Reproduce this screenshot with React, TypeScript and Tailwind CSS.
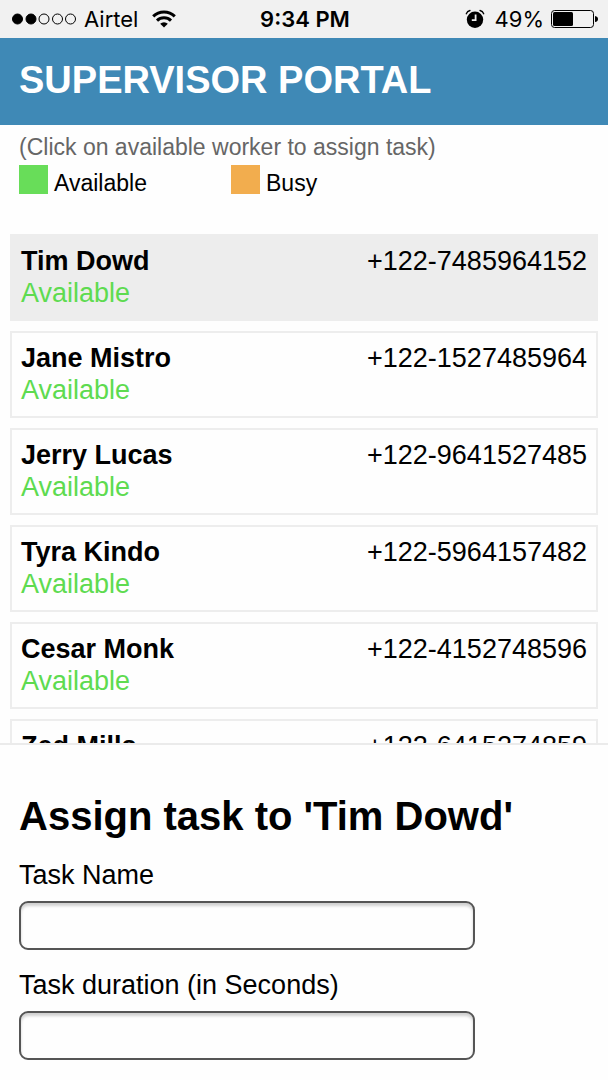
import { useState } from "react";

const workers = [
  { name: "Tim Dowd", phone: "+122-7485964152" },
  { name: "Jane Mistro", phone: "+122-1527485964" },
  { name: "Jerry Lucas", phone: "+122-9641527485" },
  { name: "Tyra Kindo", phone: "+122-5964157482" },
  { name: "Cesar Monk", phone: "+122-4152748596" },
  { name: "Zed Mills", phone: "+122-6415274859" },
];

const fieldClass =
  "mt-2.5 block h-[49px] w-4/5 rounded-[9px] border-2 border-[#555] bg-[#fefefe] px-3 text-[27px] shadow-[inset_0_3px_3px_rgba(0,0,0,0.18)]";

function StatusBar() {
  return (
    <div className="grid h-[38px] shrink-0 grid-cols-[1fr_auto_1fr] items-center bg-[#f1f1f1] pr-2.5 pl-3 font-['Inter',sans-serif] text-[22px] leading-7">
      <div className="flex items-center gap-2">
        <svg width="64" height="12" viewBox="0 0 64 12" fill="none" stroke="#000" strokeWidth="1">
          <circle cx="5.5" cy="6" r="5" fill="#000" />
          <circle cx="19" cy="6" r="5" fill="#000" />
          <circle cx="32" cy="6" r="5" />
          <circle cx="45.5" cy="6" r="5" />
          <circle cx="58.5" cy="6" r="5" />
        </svg>
        <span>Airtel</span>
        <svg width="24" height="18" viewBox="0 0 24 18" className="ml-1.5 shrink-0">
          <path d="M1.2 6.4a15.3 15.3 0 0 1 21.6 0M5 10.6a10 10 0 0 1 14 0" fill="none" stroke="#000" strokeWidth="3" />
          <path d="M8.2 13.8a5.4 5.4 0 0 1 7.6 0L12 17.6z" />
        </svg>
      </div>
      <div className="text-center font-semibold">9:34 PM</div>
      <div className="flex items-center justify-end gap-1.5">
        <svg width="20" height="20" viewBox="0 0 20 20" className="mr-1">
          <circle cx="10" cy="10.8" r="8.2" />
          <path d="M1.3 4.8Q2.2 2.2 5 1.5M15 1.5q2.8.7 3.7 3.3" fill="none" stroke="#000" strokeWidth="1.3" strokeLinecap="round" />
          <path d="M10.6 5.5v5.6H6.8" fill="none" stroke="#f1f1f1" strokeWidth="1.8" />
        </svg>
        <span>49%</span>
        <svg width="48" height="20" viewBox="0 0 48 20">
          <rect x="1.5" y="1.5" width="42" height="17" rx="3" fill="none" stroke="#000" strokeWidth="1" />
          <rect x="3" y="3" width="20" height="14" rx="1.5" />
          <path d="M45 7q3 .5 3 3t-3 3z" />
        </svg>
      </div>
    </div>
  );
}

export default function App() {
  const [selected, setSelected] = useState(0);
  return (
    <div className="flex h-screen flex-col overflow-hidden bg-[#fefefe] font-['Liberation_Sans',Arial,sans-serif] text-black">
      <StatusBar />
      <header className="flex h-[87px] shrink-0 items-center bg-[#3f89b6] px-[19px] pb-1">
        <h1 className="text-[38px] leading-[44px] font-bold text-white">SUPERVISOR PORTAL</h1>
      </header>
      <section className="h-[109px] shrink-0 px-[19px] pt-2">
        <p className="text-[23px] leading-7 text-[#666]">(Click on available worker to assign task)</p>
        <div className="mt-1 flex text-[23px] leading-7">
          <div className="flex w-[212px] items-start gap-1.5">
            <span className="size-[29px] bg-[#68dd59]" />
            <span className="pt-1">Available</span>
          </div>
          <div className="flex items-start gap-1.5">
            <span className="size-[29px] bg-[#f2ad4e]" />
            <span className="pt-1">Busy</span>
          </div>
        </div>
      </section>
      <ul className="flex min-h-0 flex-1 flex-col gap-2.5 overflow-y-auto px-2.5 [scrollbar-width:none]">
        {workers.map((w, i) => (
          <li key={w.name} className="shrink-0">
            <button
              type="button"
              onClick={() => setSelected(i)}
              className={`flex h-[87px] w-full items-start justify-between border-2 border-[#ededed] px-[9px] pt-[9px] text-left text-[27px] leading-8 ${i === selected ? "bg-[#ededed]" : "bg-[#fefefe]"}`}
            >
              <span>
                <strong className="block">{w.name}</strong>
                <span className="block text-[#5edb50]">Available</span>
              </span>
              <span>{w.phone}</span>
            </button>
          </li>
        ))}
      </ul>
      <form className="shrink-0 border-t-2 border-[#ebebeb] px-[19px] pt-12 pb-5" onSubmit={(e) => e.preventDefault()}>
        <h2 className="text-[40px] leading-[46px] font-bold">Assign task to '{workers[selected].name}'</h2>
        <label htmlFor="task-name" className="mt-5 block text-[27px] leading-8">Task Name</label>
        <input id="task-name" type="text" className={fieldClass} />
        <label htmlFor="task-duration" className="mt-[19px] block text-[27px] leading-8">Task duration (in Seconds)</label>
        <input id="task-duration" type="text" className={fieldClass} />
      </form>
    </div>
  );
}
